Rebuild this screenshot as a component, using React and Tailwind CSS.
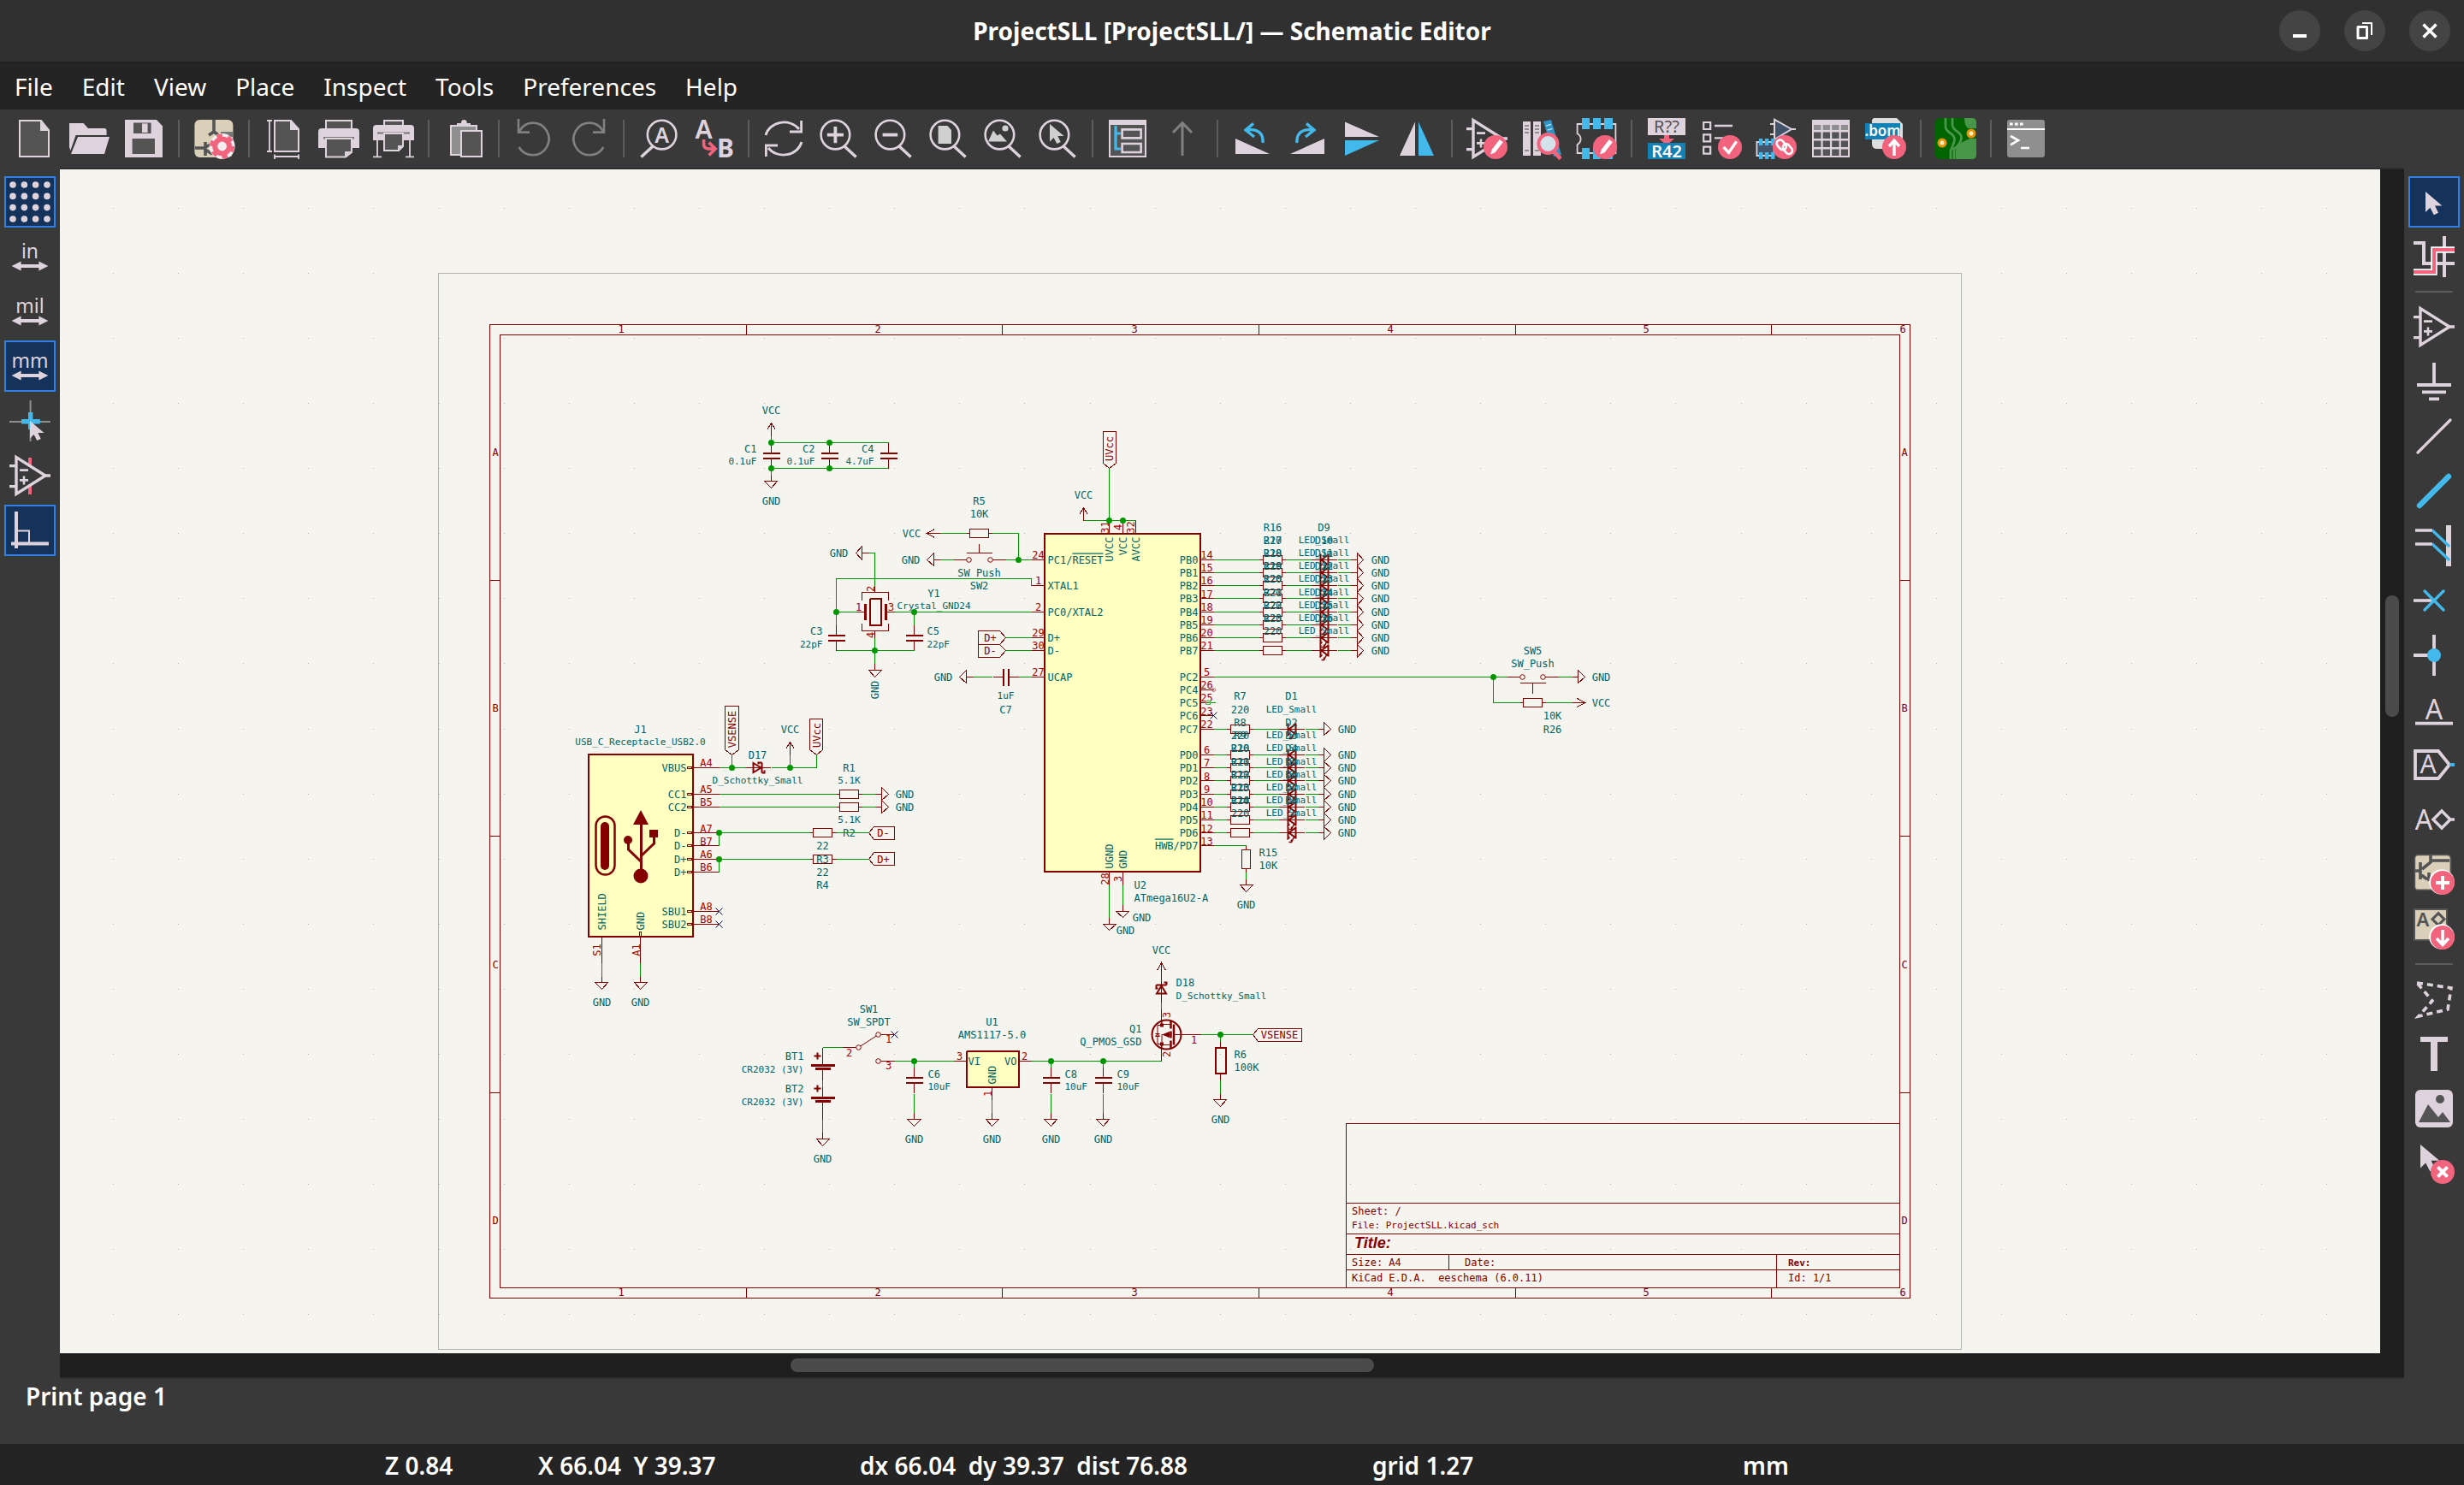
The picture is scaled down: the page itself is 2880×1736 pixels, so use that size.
import React from "react";

const LIGHT = "#ded3dd";
const BLUE = "#42b8eb";
const PINK = "#f2647e";
const DARK = "#545454";
const BEIGE = "#dacfb8";

/* ---------- icons ---------- */

const Svg = ({ children }) => (
  <svg viewBox="0 0 24 24" className="block h-12 w-12 shrink-0 overflow-visible" fill="none" aria-hidden="true">
    {children}
  </svg>
);

const Badge = ({ kind, ring }) => (
  <g transform="translate(-.5 -.5)">
    {ring && <circle cx="17" cy="17" r="7.400" fill="#fff" />}
    <circle cx="17.500" cy="17.500" r="7" fill={PINK} />
    {kind === "pencil" && <path d="M14.600 21.800l.7-2.800 4.600-6 2 1.600-4.600 6z" fill="#fff" />}
    {kind === "check" && <path d="M13.800 17.500l3 3.200 4.500-6.500" stroke="#fff" strokeWidth="1.700" />}
    {kind === "up" && <path d="M17.500 22.500v-9M14.500 17l3-3.300 3 3.300" stroke="#fff" strokeWidth="1.700" />}
    {kind === "down" && <path d="M17.500 13v9M14 18l3.500 3.700 3.500-3.700" stroke="#fff" strokeWidth="1.800" />}
    {kind === "plus" && <path d="M17.500 13.500v8M13.500 17.500h8" stroke="#fff" strokeWidth="2" />}
    {kind === "cross" && <path d="M14.700 14.700l5.600 5.600M20.300 14.700l-5.600 5.600" stroke="#fff" strokeWidth="2" />}
    {kind === "link" && (
      <g stroke="#fff" strokeWidth="1.300">
        <rect x="13.600" y="13" width="4" height="6.400" rx="2" transform="rotate(-40 15.600 16.200)" />
        <rect x="17.200" y="15.400" width="4" height="6.400" rx="2" transform="rotate(-40 19.200 18.600)" />
      </g>
    )}
  </g>
);

const Magnifier = ({ children, flip }) => (
  <Svg>
    <g transform={flip ? "matrix(-1 0 0 1 24 0)" : undefined}>
      <circle cx="10.200" cy="9.800" r="8.400" stroke={LIGHT} strokeWidth="1.300" />
      <path d="M15.500 16.500l6.800 6.300" stroke={LIGHT} strokeWidth="1.700" />
    </g>
    {children}
  </Svg>
);

const OpAmp = ({ bar }) => (
  <g>
    {bar && <path d="M12 1.500v5M12 18v5" stroke={PINK} strokeWidth="2" />}
    <path d="M4 1.300V22.700L21 12z" stroke={LIGHT} strokeWidth="1.700" />
    <path d="M0 6.300h4M0 18.300h4M20 12h4" stroke={LIGHT} strokeWidth="1.700" />
    <path d="M6 8.800h5M6 14.700h5M8.500 12.200v5" stroke={LIGHT} strokeWidth="1.300" />
  </g>
);

const Units = ({ label }) => (
  <Svg>
    <text x="12" y="13.200" textAnchor="middle" fontFamily="Noto Sans, sans-serif" fontSize="11.500" fill={LIGHT}>
      {label}
    </text>
    <path d="M4 17.500h16" stroke={LIGHT} strokeWidth="2" />
    <path d="M1.300 17.500l5.500-2.800v5.600zM22.700 17.500l-5.500-2.800v5.600z" fill={LIGHT} />
  </Svg>
);

const Cursor = ({ x = 0, y = 0, s = 1, fill = LIGHT }) => (
  <path transform={`translate(${x} ${y}) scale(${s})`} d="M0 0v12l2.700-2.600 2.200 4.200 2.600-1.200-2-4.200h4.200z" fill={fill} />
);

const icons = {
  new: (
    <Svg>
      <path d="M3.500 1.500H16l4.500 5.500V22.500h-17z" fill={DARK} stroke={LIGHT} />
      <path d="M15.500 1v6.500h5.500z" fill={LIGHT} />
    </Svg>
  ),
  open: (
    <Svg>
      <path d="M.5 3h8.300L11.500 6H21q1.300 0 1.300 1.500V10H4.300L1.200 19 .5 17z" fill={LIGHT} />
      <path d="M5.500 11H24l-3 10H1.500z" fill={LIGHT} />
    </Svg>
  ),
  save: (
    <Svg>
      <path d="M1 1h18.500L23 4.800V23H1z" fill={LIGHT} />
      <path d="M6 2.800h10.300V9H6zM5.300 12h13.200v9H5.300z" fill={DARK} />
      <path d="M11 3.200h3.300v5.300H11z" fill={LIGHT} />
    </Svg>
  ),
  setup: (
    <Svg>
      <rect x=".7" y="1" width="22.500" height="22" rx="3" fill={BEIGE} />
      <path d="M12 1v7l-3 2M12 8l4 3M7 14v8M1 17.500h6M7 17l4-2M7 18.500l4 2.500" stroke={DARK} strokeWidth="1.800" />
      <path d="M16 8h7v3h-7z" fill="#777" />
      <circle cx="16.800" cy="16.500" r="7.500" fill="#f5eef0" />
      <circle cx="16.800" cy="16.500" r="4.200" stroke={PINK} strokeWidth="3" />
      <circle cx="16.800" cy="16.500" r="6.200" stroke={PINK} strokeWidth="2.200" strokeDasharray="3.200 3.290" />
    </Svg>
  ),
  page: (
    <Svg>
      <path d="M6.500 1.500H16l4.500 5V19.500h-14z" fill={DARK} stroke={LIGHT} />
      <path d="M15.500 1v6h5.500z" fill={LIGHT} />
      <path d="M3.500 1.500v18M2 1.500h3M2 19.500h3M6.500 22.500h14M6.500 21.300v2.700M20.500 21.300v2.700" stroke={LIGHT} strokeWidth=".9" />
    </Svg>
  ),
  print: (
    <Svg>
      <path d="M4.500 1.500h15v6h-15z" fill={DARK} stroke={LIGHT} />
      <path d="M2 6h20q2 0 2 2v9.500h-4.500V12h-15v5.500H0V8q0-2 2-2z" fill={LIGHT} />
      <path d="M3 11h18v1.200H3z" fill="#777" />
      <path d="M4.500 12h15v8l-3.500 2.700H4.500z" fill={DARK} stroke={LIGHT} />
      <path d="M15.500 23v-3.500h4z" fill={LIGHT} />
    </Svg>
  ),
  plot: (
    <Svg>
      <path d="M6.500 1.500h11v4h-11z" fill={DARK} stroke={LIGHT} />
      <path d="M2 4h20q2 0 2 2v7H0V6q0-2 2-2z" fill={LIGHT} />
      <path d="M2.500 8.200h19v1h-19z" fill="#777" />
      <path d="M6.500 9h11v7.500l-2.500 2.500H6.500z" fill={DARK} stroke={LIGHT} />
      <path d="M14.500 19v-3h3z" fill={LIGHT} />
      <path d="M2.500 13v10M21.500 13v10M0 22.700h5M19 22.700h5" stroke={LIGHT} strokeWidth=".9" />
    </Svg>
  ),
  paste: (
    <Svg>
      <path d="M4.500 4.500h15v17h-15z" fill="#8f8f8f" stroke={LIGHT} />
      <path d="M8 5V3h2.500q0-2 1.700-2t1.700 2H16v2z" fill={LIGHT} />
      <path d="M10.500 7.500h12v15h-12z" fill={DARK} stroke={LIGHT} />
    </Svg>
  ),
  undo: (
    <Svg>
      <path d="M3 .5V8.300H9.500M3.300 8C5 4.800 8 2.800 11.500 2.800a9.400 9.400 0 1 1-8.200 14.200" stroke="#808080" strokeWidth="1.300" />
    </Svg>
  ),
  redo: (
    <Svg>
      <path d="M21 .5V8.300H14.500M20.700 8C19 4.800 16 2.800 12.500 2.800a9.400 9.400 0 1 0 8.200 14.200" stroke="#808080" strokeWidth="1.300" />
    </Svg>
  ),
  find: (
    <Magnifier flip>
      <text x="13.800" y="14.500" textAnchor="middle" fontFamily="Noto Sans, sans-serif" fontWeight="600" fontSize="12.500" fill={LIGHT}>A</text>
    </Magnifier>
  ),
  replace: (
    <Svg>
      <text x="6.300" y="12" textAnchor="middle" fontFamily="Noto Sans, sans-serif" fontWeight="600" fontSize="15" fill={LIGHT}>A</text>
      <text x="19" y="23" textAnchor="middle" fontFamily="Noto Sans, sans-serif" fontWeight="700" fontSize="15" fill={LIGHT}>B</text>
      <path d="M6.300 12.500v3q0 2 2.500 2.500h3M9.300 14.300l3.800 3.700-3.800 3.800" stroke={PINK} strokeWidth="1.800" />
    </Svg>
  ),
  refresh: (
    <Svg>
      <path d="M1.500 10A11 10 0 0 1 21 6.500M22.300 1.500V8H15.500" stroke={LIGHT} strokeWidth="1.400" />
      <path d="M22.500 14A11 10 0 0 1 3 17.500M1.700 22.500V16H8.500" stroke={LIGHT} strokeWidth="1.400" />
    </Svg>
  ),
  zin: <Magnifier><path d="M10.200 5v9.600M5.400 9.800h9.600" stroke={LIGHT} strokeWidth="1.900" /></Magnifier>,
  zout: <Magnifier><path d="M5.800 9.800h8.800" stroke={LIGHT} strokeWidth="1.900" /></Magnifier>,
  zfit: <Magnifier><path d="M6.300 4.500h5.400l2.300 2.500v8H6.300z" fill="#d0d0d0" /></Magnifier>,
  zobj: (
    <Magnifier>
      <path d="M3.500 13.700l3-6.500 2.300 3 1.700-1 4 4.500z" fill="#d0d0d0" />
      <circle cx="13.500" cy="6" r="1.800" fill="#d0d0d0" />
    </Magnifier>
  ),
  zsel: <Magnifier><Cursor x={7.500} y={3.500} s={0.850} fill="#d0d0d0" /></Magnifier>,
  hierarchy: (
    <Svg>
      <path d="M1.500 1.500h21v21h-21z" fill={DARK} stroke={LIGHT} />
      <path d="M1 1h22v3H1z" fill={LIGHT} />
      <path d="M5 4.500V18h3M5 9h3" stroke={BLUE} strokeWidth="1.600" />
      <path d="M8.800 6.700h11v5h-11zM8.800 15h11v5h-11z" stroke={LIGHT} strokeWidth="1.300" />
    </Svg>
  ),
  up: <Svg><path d="M12 22V3M6.500 8.500L12 2.800l5.500 5.700" stroke="#808080" strokeWidth="1.500" /></Svg>,
  ccw: (
    <Svg>
      <path d="M2 12v9h20z" fill={LIGHT} />
      <path d="M18 14.500C18.500 9 15 6 9 7M12.500 3.200L8 7l5 4" stroke={BLUE} strokeWidth="1.700" />
    </Svg>
  ),
  cw: (
    <Svg>
      <path d="M22 12v9H2z" fill={LIGHT} />
      <path d="M6 14.500C5.500 9 9 6 15 7M11.500 3.200L16 7l-5 4" stroke={BLUE} strokeWidth="1.700" />
    </Svg>
  ),
  mirv: <Svg><path d="M2 2.200v8.800h20z" fill={LIGHT} /><path d="M2 13v9L22 13z" fill={BLUE} /></Svg>,
  mirh: <Svg><path d="M11 2.200V22H2z" fill={LIGHT} /><path d="M13 2.200V22h9z" fill={BLUE} /></Svg>,
  symedit: <Svg><OpAmp /><Badge kind="pencil" /></Svg>,
  browse: (
    <Svg>
      <path d="M1 2h4.500v20H1zM7 2h4.500v20H7z" fill={LIGHT} />
      <path d="M13 2l4.500-1 6 20.500-4.500 1z" fill="#2f93c4" />
      <path d="M2 4.500h2.500M2 6.500h2.500M2 8.500h2.500M8 4.500h2.500M8 6.500h2.500M8 8.500h2.500M2 19h2.500M8 19h2.500" stroke="#8f8f8f" strokeWidth=".9" />
      <path d="M14.500 4.500l3-.8M15.300 7l3-.8" stroke="#a5d8ef" strokeWidth=".8" />
      <circle cx="15.700" cy="15" r="5.500" fill="#d3e3ec" stroke={PINK} strokeWidth="2" />
      <path d="M19 19.300l4 4.500" stroke={PINK} strokeWidth="2.300" />
    </Svg>
  ),
  fpedit: (
    <Svg>
      <path d="M.8 3.500h22.400v17H.8v-5q2-1 2-3.200t-2-3.200z" stroke={LIGHT} strokeWidth=".9" />
      <path d="M3.500 0h4.500v6.500h-4.500zM10 0h4.500v6.500h-4.500zM16.500 0h5v6.500h-5zM3.500 17.500h4.500V24h-4.500zM10 17.500h4.500V24h-4.500zM16.500 20h5v4h-5z" fill={BLUE} />
      <Badge kind="pencil" />
    </Svg>
  ),
  annotate: (
    <Svg>
      <path d="M1 0h22v10H1z" fill={LIGHT} />
      <text x="12" y="8.700" textAnchor="middle" fontFamily="Noto Sans, sans-serif" fontSize="10" fill="#545454">R??</text>
      <path d="M10.500 10h3v2h3L12 16l-4.500-4h3z" fill={PINK} />
      <path d="M1 14.500h22V24H1z" fill="#1281b5" />
      <text x="12" y="22.800" textAnchor="middle" fontFamily="Noto Sans, sans-serif" fontWeight="600" fontSize="10" fill="#fff">R42</text>
    </Svg>
  ),
  erc: (
    <Svg>
      <path d="M1.600 2.500h4v4h-4zM1.600 9.700h4v4h-4zM1.600 16.800h4v4h-4z" stroke={LIGHT} strokeWidth="1.100" />
      <path d="M8 4.500h10.500M8 11.700h7" stroke={LIGHT} strokeWidth="1.200" />
      <Badge kind="check" />
    </Svg>
  ),
  assign: (
    <Svg>
      <path d="M11 .8v11.700L21 6.500z" fill="#42546a" stroke={LIGHT} strokeWidth="1" />
      <path d="M8.500 3.500H11M8.500 9.500H11M21 6.500h2.500" stroke={LIGHT} strokeWidth="1" />
      <path d="M.7 14h10v8H.7z" fill="#42546a" stroke={LIGHT} strokeWidth=".9" />
      <path d="M2 12h2.200v4H2zM5.500 12h2.200v4H5.500zM9 12h2.200v4H9zM2 20h2.200v4H2zM5.500 20h2.200v4H5.500zM9 20h2.200v4H9z" fill={BLUE} />
      <Badge kind="link" />
    </Svg>
  ),
  table: (
    <Svg>
      <path d="M1 1h22v22H1z" fill={LIGHT} />
      <path d="M2 4h4.200v3H2zM7.300 4h4.200v3H7.300zM12.600 4h4.200v3h-4.200zM17.900 4H22v3h-4.100z" fill="#8f8f8f" />
      <path d="M2 8.200h4.200V12H2zM7.300 8.200h4.200V12H7.300zM12.600 8.200h4.200V12h-4.200zM17.900 8.200H22V12h-4.100zM2 13.200h4.200V17H2zM7.300 13.200h4.200V17H7.300zM12.600 13.200h4.200V17h-4.200zM17.900 13.200H22V17h-4.100zM2 18.200h4.200V22H2zM7.300 18.200h4.200V22H7.300zM12.600 18.200h4.200V22h-4.200zM17.900 18.200H22V22h-4.100z" fill={DARK} />
    </Svg>
  ),
  bom: (
    <Svg>
      <path d="M5 0h13.500L22 3.500V15q0 3-3 3H7q-3 0-3-3V1z" fill="#dedede" />
      <path d="M0 3h20.500v9.500H0z" fill="#1281b5" />
      <text x="10.300" y="10.300" textAnchor="middle" fontFamily="Noto Sans, sans-serif" fontWeight="600" fontSize="8.500" fill="#fff">.bom</text>
      <Badge kind="up" />
    </Svg>
  ),
  pcb: (
    <Svg>
      <rect width="24" height="24" rx="2.500" fill="#006400" />
      <path d="M17 0h4.500Q24 0 24 2.500V6h-5q-2-2-2-6zM20 12h4v9.500q0 2.500-2.500 2.500H12v-5q0-3 4-5z" fill="#489648" />
      <path d="M6 0v5q0 2 3 4t2 5-2 5v5M10 0v4q0 2 3 4t2 5-4 5v6" stroke="#489648" strokeWidth="1.400" />
      <circle cx="21" cy="9" r="2" fill="#fff3c0" stroke="#e8920c" strokeWidth="1.500" />
      <circle cx="4" cy="14.500" r="2" fill="#fff3c0" stroke="#e8920c" strokeWidth="1.500" />
    </Svg>
  ),
  console: (
    <Svg>
      <rect x="1" y="1" width="22" height="22" rx="1.500" fill="#8f8f8f" />
      <path d="M1 6.500h22" stroke="#fff" strokeWidth="1.100" />
      <path d="M2.500 3.500h1.800M5.500 3.500h1.800M8.500 3.500h1.800" stroke="#fff" strokeWidth="1.600" />
      <path d="M3 10.500l4.500 2.500L3 15.700M9 17.500h5" stroke="#fff" strokeWidth="1.300" />
    </Svg>
  ),
  grid: (
    <Svg>
      {[2, 8.700, 15.300, 22].map((y) =>
        [2, 8.700, 15.300, 22].map((x) => <circle key={`${x}-${y}`} cx={x} cy={y} r="1.900" fill={LIGHT} />)
      )}
    </Svg>
  ),
  inch: <Units label="in" />,
  mil: <Units label="mil" />,
  mm: <Units label="mm" />,
  cross: (
    <Svg>
      <path d="M12.300 0v24M0 12.500h24" stroke="#8f8f8f" />
      <path d="M11 7h2.700v4h4.200v2.800h-4.200V17H11v-3.200H7V11h4z" fill={BLUE} />
      <Cursor x={12} y={12} s={0.850} />
    </Svg>
  ),
  hidden: <Svg><OpAmp bar /></Svg>,
  ortho: (
    <Svg>
      <path d="M4 1v21.500M1 19.700h22" stroke={LIGHT} strokeWidth="2" />
      <path d="M4 12.300h7.500v7" stroke={LIGHT} strokeWidth="1" />
    </Svg>
  ),
  select: <Svg><Cursor x={7} y={6} s={1} /></Svg>,
  highlight: (
    <Svg>
      <path d="M0 4h6v12h18M18 0v24" stroke={LIGHT} strokeWidth="2" />
      <path d="M0 21h12V8h12" stroke="#fff" strokeWidth="3.800" />
      <path d="M0 21h12V8h12" stroke={PINK} strokeWidth="2" />
    </Svg>
  ),
  symbol: <Svg><OpAmp /></Svg>,
  power: <Svg><path d="M12 1v12.500M2 14h20M5 18.200h14M9 22.200h6" stroke={LIGHT} strokeWidth="1.900" /></Svg>,
  wire: <Svg><path d="M2.500 21.500l19-19" stroke={LIGHT} strokeWidth="1.600" strokeLinecap="round" /></Svg>,
  bus: <Svg><path d="M3.500 20.500l17-17" stroke={BLUE} strokeWidth="3.200" strokeLinecap="round" /></Svg>,
  entry: (
    <Svg>
      <path d="M1 3h10M1 11h10" stroke={LIGHT} strokeWidth="1.800" />
      <path d="M20.500 0v24" stroke={LIGHT} strokeWidth="3" />
      <path d="M11 3l10 9.500M11 11l10 9.500" stroke={BLUE} strokeWidth="1.700" />
    </Svg>
  ),
  noconn: (
    <Svg>
      <path d="M0 12h11" stroke={LIGHT} strokeWidth="1.800" />
      <path d="M6.500 6.500l11 11M17.500 6.500l-11 11" stroke={BLUE} strokeWidth="1.700" strokeLinecap="round" />
    </Svg>
  ),
  junction: (
    <Svg>
      <path d="M12 0v24M0 12h11" stroke={LIGHT} strokeWidth="1.900" />
      <circle cx="12" cy="12" r="4" fill={BLUE} />
    </Svg>
  ),
  label: (
    <Svg>
      <text x="12" y="17.500" textAnchor="middle" fontFamily="Noto Sans, sans-serif" fontSize="16" fill={LIGHT}>A</text>
      <path d="M1 19.800h22" stroke={LIGHT} strokeWidth="1.800" />
    </Svg>
  ),
  glabel: (
    <Svg>
      <path d="M1 4h13.500l6.500 8-6.500 8H1z" stroke={LIGHT} strokeWidth="1.900" />
      <text x="8.500" y="17.200" textAnchor="middle" fontFamily="Noto Sans, sans-serif" fontSize="15" fill={LIGHT}>A</text>
      <path d="M21 12h3" stroke={BLUE} strokeWidth="1.900" />
    </Svg>
  ),
  hlabel: (
    <Svg>
      <text x="6" y="18" textAnchor="middle" fontFamily="Noto Sans, sans-serif" fontSize="16" fill={LIGHT}>A</text>
      <path d="M16.500 7l5 5-5 5-5-5zM21 12h3" stroke={LIGHT} strokeWidth="1.700" />
    </Svg>
  ),
  sheet: (
    <Svg>
      <rect x=".7" y=".7" width="21" height="20.500" rx="2" fill={BEIGE} stroke={DARK} strokeWidth=".8" />
      <path d="M10 1v4l-5 4M10 4h11M1 10h3M4 5v10M4 12l4 3M9 11v5" stroke={DARK} strokeWidth="1.800" />
      <Badge kind="plus" ring />
    </Svg>
  ),
  import: (
    <Svg>
      <path d="M.5 .5h19v18H.5z" fill={BEIGE} stroke={DARK} />
      <text x="5.500" y="10.500" textAnchor="middle" fontFamily="Noto Sans, sans-serif" fontWeight="600" fontSize="11" fill={DARK}>A</text>
      <path d="M14.500 2.800L18 6.300l-3.500 3.500L11 6.300z" stroke={DARK} strokeWidth="1.500" />
      <Badge kind="down" ring />
    </Svg>
  ),
  poly: (
    <Svg>
      <path d="M2 2.500L22 5.500 20 18 3 22 11 13z" stroke={LIGHT} strokeWidth="1.800" strokeDasharray="3.500 2.500" />
    </Svg>
  ),
  text: <Svg><path d="M4 2h16v3h-6v17h-4V5H4z" fill={LIGHT} /></Svg>,
  image: (
    <Svg>
      <rect x="1" y="1" width="22" height="22" rx="3" fill={LIGHT} />
      <circle cx="15.500" cy="6.500" r="2.500" fill={DARK} />
      <path d="M3 20l5.500-10.500 6 7.500 2.500-3 4.500 6z" fill={DARK} />
    </Svg>
  ),
  del: <Svg><Cursor x={4} y={1} s={1.150} /><Badge kind="cross" /></Svg>,
};

/* ---------- schematic ---------- */

const SYM = "#840000";
const WIRE = "#009600";
const REF = "#006464";
const PIN = "#a90000";
const X = (n) => Math.floor(513 + n * 7.61) + 0.5;
const Y = (n) => Math.floor(319.300 + n * 7.61) + 0.5;

const Path = ({ p, c = SYM, w = 1, fill = "none" }) => (
  <polyline
    points={p.map(([a, b]) => `${X(a)},${Y(b)}`).join(" ")}
    stroke={c}
    strokeWidth={w}
    fill={fill}
    shapeRendering="crispEdges"
  />
);
const Wire = (props) => <Path {...props} c={WIRE} />;
const Dot = ({ x, y }) => <circle cx={X(x)} cy={Y(y)} r="3.500" fill={WIRE} />;
const T = ({ x, y, a = "middle", rot, c = REF, s, children, ...rest }) => {
  const size = s ?? (/[a-z]{2}/.test(String(children)) ? 11 : 12);
  return (
    <text
      transform={`translate(${X(x)} ${Y(y)})${rot ? " rotate(-90)" : ""}`}
      y={size === 11 ? 3 : 4}
      textAnchor={a}
      fill={c}
      fontSize={size}
      {...rest}
    >
      {children}
    </text>
  );
};
const Gnd = ({ x, y, d = "down", tx, ty, rot }) => {
  const k = { down: [0, 1], left: [-1, 0], right: [1, 0] }[d];
  const bx = x + k[0];
  const by = y + k[1];
  return (
    <g>
      <Path p={[[x, y], [bx, by]]} />
      <Path
        p={[[bx - k[1], by - k[0]], [bx + k[0], by + k[1]], [bx + k[1], by + k[0]], [bx - k[1], by - k[0]]]}
      />
      <T x={tx ?? bx + k[0] * 3.550} y={ty ?? by + k[1] * 3} rot={rot}>GND</T>
    </g>
  );
};
const Vcc = ({ x, y, d = "up" }) => {
  const k = { up: [0, -1], left: [-1, 0], right: [1, 0] }[d];
  const tx = x + 2 * k[0];
  const ty = y + 2 * k[1];
  const hx = tx - 1.100 * k[0];
  const hy = ty - 1.100 * k[1];
  const o = 0.650;
  return (
    <g>
      <Path p={[[x, y], [tx, ty]]} />
      <Path p={[[hx + k[1] * o, hy + k[0] * o], [tx, ty], [hx - k[1] * o, hy - k[0] * o]]} />
      <T x={tx + k[0] * 2.450} y={ty + k[1] * 2}>VCC</T>
    </g>
  );
};
const Res = ({ x, y }) => (
  <g>
    <Path p={[[x - 2, y], [x - 1.500, y]]} />
    <Path p={[[x + 1.400, y], [x + 2, y]]} />
    <rect x={X(x) - 11} y={Y(y) - 5} width="22" height="10" fill="none" stroke={SYM} shapeRendering="crispEdges" />
  </g>
);
const Cap = ({ x, y, side }) => (
  <g transform={`translate(${X(x)} ${Y(y)})${side ? " rotate(90)" : ""}`} stroke={SYM} shapeRendering="crispEdges">
    <path d="M0 -15V-3M0 3V15" />
    <path d="M-10 -3H10M-10 3H10" strokeWidth="2" />
  </g>
);
const Diode = ({ x, y, up }) => (
  <g transform={`translate(${X(x)} ${Y(y)})${up ? " rotate(-90)" : ""}`} stroke={SYM} fill="none">
    <path d="M-15 0H15" shapeRendering="crispEdges" />
    <path d="M-5 -5.500L4 0L-5 5.500z" strokeWidth="2" />
    <path d="M5 -6V6M5 6H8V3M5 -6H1V-4" strokeWidth="2" />
  </g>
);
const Led = ({ x, y }) => (
  <g transform={`translate(${X(x)} ${Y(y)})`} stroke={SYM} fill="none">
    <path d="M-15 0H15" shapeRendering="crispEdges" />
    <path d="M-4 -7V7M5 -7V7M5 -6L-3 0L5 6" strokeWidth="2" />
    <path d="M-2 5L-5 8M3 5L0 11M-3 11h3v-3" strokeWidth="1.500" />
  </g>
);
const Flag = ({ x, y, len, d, children }) => {
  const pts =
    d === "up"
      ? [[x, y], [x - 1, y - 0.800], [x - 1, y - len], [x + 1, y - len], [x + 1, y - 0.800], [x, y]]
      : d === "left"
        ? [[x, y], [x - 0.800, y - 1], [x - len, y - 1], [x - len, y + 1], [x - 0.800, y + 1], [x, y]]
        : [[x, y], [x + 0.800, y - 1], [x + len, y - 1], [x + len, y + 1], [x + 0.800, y + 1], [x, y]];
  return (
    <g>
      <Path p={pts} />
      {d === "up" ? (
        <T x={x} y={y - len / 2 - 0.200} rot c={SYM} s={12}>{children}</T>
      ) : (
        <T x={d === "left" ? x - len / 2 - 0.200 : x + len / 2 + 0.300} y={y} c={SYM} s={12}>{children}</T>
      )}
    </g>
  );
};
const Cross = ({ x, y }) => (
  <path d={`M${X(x) - 4} ${Y(y) - 4}l8 8m0 -8l-8 8`} stroke="#000084" strokeWidth="1" />
);
const Ring = ({ x, y }) => <circle cx={X(x)} cy={Y(y)} r="2.800" stroke={SYM} fill="#f5f4ef" />;

const leftPins = [
  [44, "24", null], [48, "1", "XTAL1"], [52, "2", "PC0/XTAL2"], [56, "29", "D+"], [58, "30", "D-"], [62, "27", "UCAP"],
];
const rightPins = [
  ...[14, 15, 16, 17, 18, 19, 20, 21].map((n, i) => [44 + 2 * i, n, `PB${i}`]),
  [62, 5, "PC2"], [64, 26, "PC4"], [66, 25, "PC5"], [68, 23, "PC6"], [70, 22, "PC7"],
  ...[6, 7, 8, 9, 10, 11, 12].map((n, i) => [74 + 2 * i, n, `PD${i}`]),
  [88, 13, null],
];
const usbPins = [
  [76, "A4", "VBUS"], [80, "A5", "CC1"], [82, "B5", "CC2"], [86, "A7", "D-"], [88, "B7", "D-"],
  [90, "A6", "D+"], [92, "B6", "D+"], [98, "A8", "SBU1"], [100, "B8", "SBU2"],
];
const ledRows = [
  ...[0, 1, 2, 3, 4, 5, 6, 7].map((i) => ({ y: 44 + 2 * i, r: 16 + i, d: 9 + i, x: 128, lx: 136 })),
  ...[70, 74, 76, 78, 80, 82, 84, 86].map((y, i) => ({ y, r: 7 + i, d: 1 + i, x: 123, lx: 131 })),
];

const Frame = () => (
  <g fill="none" stroke={SYM} shapeRendering="crispEdges">
    <rect x="512.500" y="319.500" width="1780" height="1258" stroke="#b4b4b0" />
    <rect x="572.500" y="379.500" width="1660" height="1138" />
    <rect x="584.500" y="391.500" width="1636" height="1114" />
    {[872.500, 1171.500, 1471.500, 1771.500, 2070.500].map((x) => (
      <path key={x} d={`M${x} 379V391M${x} 1505V1517`} />
    ))}
    {[678.500, 977.500, 1277.500].map((y) => (
      <path key={y} d={`M572 ${y}H584M2220 ${y}H2232`} />
    ))}
    <path d="M1573.500 1505V1313.500H2220M1573 1406.500H2220M1573 1442.500H2220M1573 1466.500H2220M1573 1484.500H2220M1693.500 1466V1484M2076.500 1466V1505" />
    <g fill={SYM} stroke="none" fontSize="12" textAnchor="middle">
      {[726, 1026, 1326, 1625, 1924, 2224].map((x, i) => (
        <React.Fragment key={x}>
          <text x={x} y="389">{i + 1}</text>
          <text x={x} y="1515">{i + 1}</text>
        </React.Fragment>
      ))}
      {[529, 828, 1128, 1427].map((y, i) => (
        <React.Fragment key={y}>
          <text x="579" y={y + 4}>{"ABCD"[i]}</text>
          <text x="2226" y={y + 4}>{"ABCD"[i]}</text>
        </React.Fragment>
      ))}
    </g>
    <g fill={SYM} stroke="none" fontSize="12">
      <text x="1580" y="1420">Sheet: /</text>
      <text x="1580" y="1436" fontSize="11">File: ProjectSLL.kicad_sch</text>
      <text x="1583" y="1459" fontSize="18" fontWeight="700" fontStyle="italic" fontFamily="Liberation Sans, sans-serif">Title:</text>
      <text x="1580" y="1480">Size: A4</text>
      <text x="1712" y="1480">Date:</text>
      <text x="2090" y="1480" fontWeight="700" fontSize="11">Rev:</text>
      <text x="1580" y="1498">{"KiCad E.D.A.\u00a0\u00a0eeschema (6.0.11)"}</text>
      <text x="2090" y="1498">Id: 1/1</text>
    </g>
  </g>
);

const GridDots = () => {
  const dots = [];
  for (let i = -50; i <= 290; i += 10) for (let j = -10; j <= 160; j += 10) dots.push(`M${X(i) - 0.500} ${Y(j)}h1`);
  return <path d={dots.join("")} stroke="#b0b0ac" shapeRendering="crispEdges" />;
};

const Mcu = () => (
  <g>
    <rect x={X(93) + 0.500} y={Y(40) + 0.500} width="182" height="395" fill="#ffffc2" stroke={SYM} strokeWidth="2" shapeRendering="crispEdges" />
    {leftPins.map(([y, n, name]) => (
      <g key={n}>
        <Path p={[[91, y], [93, y]]} />
        <T x={92} y={y - 0.750} c={PIN}>{n}</T>
        <T x={93.500} y={y} a="start" s={12}>
          {name ?? <>PC1/<tspan textDecoration="overline">RESET</tspan></>}
        </T>
      </g>
    ))}
    {rightPins.map(([y, n, name]) => (
      <g key={n}>
        <Path p={[[117, y], [119, y]]} />
        <T x={118} y={y - 0.750} c={PIN}>{n}</T>
        <T x={116.600} y={y} a="end" s={12}>
          {name ?? <><tspan textDecoration="overline">HWB</tspan>/PD7</>}
        </T>
      </g>
    ))}
    {[[103, 31, "UVCC"], [105, 4, "VCC"], [107, 32, "AVCC"]].map(([x, n, name]) => (
      <g key={n}>
        <Path p={[[x, 38], [x, 40]]} />
        <T x={x - 0.750} y={39} rot c={PIN}>{n}</T>
        <T x={x} y={40.500} rot a="end">{name}</T>
      </g>
    ))}
    {[[103, 28, "UGND"], [105, 3, "GND"]].map(([x, n, name]) => (
      <g key={n}>
        <Path p={[[x, 92], [x, 94]]} />
        <T x={x - 0.750} y={93} rot c={PIN}>{n}</T>
        <T x={x} y={91.500} rot a="start">{name}</T>
      </g>
    ))}
    <T x={106.800} y={94} a="start">U2</T>
    <T x={106.800} y={96} a="start" s={12}>ATmega16U2-A</T>
    <Wire p={[[103, 94], [103, 99]]} />
    <Gnd x={103} y={99} tx={105.500} ty={101} />
    <Wire p={[[105, 94], [105, 97]]} />
    <Gnd x={105} y={97} tx={108} ty={99} />
    <Flag x={103} y={30} len={5.600} d="up">UVcc</Flag>
    <Wire p={[[103, 30], [103, 38]]} />
    <Vcc x={99} y={38} />
    <Wire p={[[99, 38], [107, 38]]} />
    <Dot x={103} y={38} />
    <Dot x={105} y={38} />
    <circle cx={X(119)} cy={Y(64)} r="2" stroke="#c86464" fill="none" />
    <Wire p={[[118, 66], [119.200, 66]]} />
    <rect x={X(118.100) - 2} y={Y(66) - 2} width="5" height="4" fill="none" stroke="#50b450" />
    <Cross x={119} y={68} />
  </g>
);

const Usb = () => (
  <g>
    <rect x={X(23) - 0.500} y={Y(74) - 0.500} width="122" height="213" fill="#ffffc2" stroke={SYM} strokeWidth="2" shapeRendering="crispEdges" />
    <T x={31} y={70}>J1</T>
    <T x={31} y={72}>USB_C_Receptacle_USB2.0</T>
    {usbPins.map(([y, n, name]) => (
      <g key={n}>
        <Path p={[[39, y], [43, y]]} />
        <T x={41} y={y - 0.750} c={PIN}>{n}</T>
        <T x={38} y={y} a="end">{name}</T>
        <rect x={X(38.150)} y={Y(y) - 1} width="5" height="2" fill="none" stroke={SYM} shapeRendering="crispEdges" />
      </g>
    ))}
    <T x={25} y={101} rot a="start">SHIELD</T>
    <T x={31} y={101} rot a="start">GND</T>
    <rect x={X(31) - 1} y={Y(101.200)} width="2" height="5" fill="none" stroke={SYM} shapeRendering="crispEdges" />
    {[[25, "S1"], [31, "A1"]].map(([x, n]) => (
      <g key={n}>
        <Path p={[[x, 102], [x, 106]]} />
        <T x={x - 0.750} y={104} rot c={PIN}>{n}</T>
        <Wire p={[[x, 106], [x, 108]]} />
        <Gnd x={x} y={108} />
      </g>
    ))}
    <rect x="696.500" y="954.500" width="22" height="68" rx="11" fill="none" stroke={SYM} strokeWidth="2.500" />
    <rect x="702" y="961" width="10" height="56" rx="5" fill={SYM} />
    <g fill={SYM}>
      <path d="M749 947l9 17h-18z" />
      <circle cx="749" cy="1024" r="8.500" />
      <circle cx="734" cy="982" r="5" />
      <path d="M759 970h10v9h-10z" />
    </g>
    <path d="M749.500 963V1018M734.500 984V993L749 1007M764.500 978V986L750 1000" fill="none" stroke={SYM} strokeWidth="3" />
    <Cross x={43} y={98} />
    <Cross x={43} y={100} />

    <Wire p={[[43, 76], [47, 76]]} />
    <Diode x={49} y={76} />
    <Wire p={[[51, 76], [58, 76], [58, 74]]} />
    <Wire p={[[45, 74], [45, 76]]} />
    <Wire p={[[54, 74], [54, 76]]} />
    <Flag x={45} y={74} len={7.500} d="up">VSENSE</Flag>
    <Flag x={58} y={74} len={5.500} d="up">UVcc</Flag>
    <Vcc x={54} y={74} />
    <Dot x={45} y={76} />
    <Dot x={54} y={76} />
    <T x={49} y={74}>D17</T>
    <T x={49} y={78}>D_Schottky_Small</T>

    {[80, 82].map((y) => (
      <g key={y}>
        <Wire p={[[43, y], [61, y]]} />
        <Res x={63} y={y} />
        <Wire p={[[65, y], [67, y]]} />
        <Gnd x={67} y={y} d="right" />
      </g>
    ))}
    <T x={63} y={76}>R1</T>
    <T x={63} y={78} s={11}>5.1K</T>
    <T x={63} y={84} s={11}>5.1K</T>
    <T x={63} y={86}>R2</T>
    {[[86, "D-"], [90, "D+"]].map(([y, n]) => (
      <g key={n}>
        <Wire p={[[43, y + 2], [43, y], [57, y]]} />
        <Res x={59} y={y} />
        <Wire p={[[61, y], [66, y]]} />
        <Flag x={66} y={y} len={4} d="right">{n}</Flag>
        <Dot x={43} y={y} />
      </g>
    ))}
    <T x={59} y={88}>22</T>
    <T x={59} y={90}>R3</T>
    <T x={59} y={92}>22</T>
    <T x={59} y={94}>R4</T>
  </g>
);

const Oscillator = () => (
  <g>
    <Vcc x={51} y={25} />
    <Wire p={[[51, 25], [51, 26], [69, 26]]} />
    <Wire p={[[69, 30], [51, 30], [51, 31]]} />
    {[[51, "C1", "0.1uF"], [60, "C2", "0.1uF"], [69, "C4", "4.7uF"]].map(([x, r, v]) => (
      <g key={r}>
        <Cap x={x} y={28} />
        <T x={x - 2.200} y={27} a="end">{r}</T>
        <T x={x - 2.200} y={29} a="end" s={11}>{v}</T>
      </g>
    ))}
    <Dot x={51} y={26} />
    <Dot x={60} y={26} />
    <Dot x={51} y={30} />
    <Dot x={60} y={30} />
    <Gnd x={51} y={31} />

    <T x={83} y={35}>R5</T>
    <T x={83} y={37}>10K</T>
    <Vcc x={77} y={40} d="left" />
    <Wire p={[[77, 40], [81, 40]]} />
    <Res x={83} y={40} />
    <Wire p={[[85, 40], [89, 40], [89, 44]]} />
    <Gnd x={77} y={44} d="left" />
    <Wire p={[[77, 44], [79, 44]]} />
    <Path p={[[79, 44], [81.300, 44]]} />
    <Path p={[[84.700, 44], [87, 44]]} />
    <Ring x={81.350} y={44} />
    <Ring x={84.650} y={44} />
    <Path p={[[81, 43], [85, 43]]} />
    <Path p={[[83, 41.500], [83, 43]]} />
    <Wire p={[[87, 44], [91, 44]]} />
    <Dot x={89} y={44} />
    <T x={83} y={46} s={12}>SW_Push</T>
    <T x={83} y={48}>SW2</T>

    <Gnd x={66} y={43} d="left" />
    <Wire p={[[66, 43], [67, 43], [67, 48]]} />
    <Path p={[[67, 48], [67, 49.100]]} />
    <Path p={[[65, 50.250], [65, 49.100], [69, 49.100], [69, 50.250]]} />
    <Path p={[[65, 53.800], [65, 54.900], [69, 54.900], [69, 53.800]]} />
    <Path p={[[66.100, 50], [67.900, 50], [67.900, 54], [66.100, 54], [66.100, 50]]} w={2} />
    <Path p={[[65.500, 50.750], [65.500, 53.250]]} w={3} />
    <Path p={[[68.700, 50.750], [68.700, 53.250]]} w={3} />
    <Path p={[[64, 52], [65.500, 52]]} />
    <Path p={[[68.700, 52], [70, 52]]} />
    <Path p={[[67, 54.900], [67, 56]]} />
    <T x={64.500} y={51.250} c={PIN}>1</T>
    <T x={69.500} y={51.250} c={PIN}>3</T>
    <T x={66.250} y={48.500} rot c={PIN}>2</T>
    <T x={66.250} y={55.600} rot c={PIN}>4</T>
    <T x={76} y={49.200}>Y1</T>
    <T x={76} y={51.200} s={11}>Crystal_GND24</T>
    <Wire p={[[64, 52], [61, 52], [61, 47], [91, 47], [91, 48]]} />
    <Wire p={[[61, 52], [61, 54]]} />
    <Wire p={[[73, 52], [73, 54]]} />
    <Wire p={[[70, 52], [91, 52]]} />
    <Cap x={61} y={56} />
    <Cap x={73} y={56} />
    <Wire p={[[61, 58], [73, 58]]} />
    <Wire p={[[67, 56], [67, 60]]} />
    <Dot x={61} y={52} />
    <Dot x={73} y={52} />
    <Dot x={67} y={58} />
    <Gnd x={67} y={60} rot />
    <T x={59} y={55} a="end">C3</T>
    <T x={59} y={57} a="end" s={11}>22pF</T>
    <T x={75} y={55} a="start">C5</T>
    <T x={75} y={57} a="start" s={11}>22pF</T>

    <Flag x={87} y={56} len={4.100} d="left">D+</Flag>
    <Flag x={87} y={58} len={4.100} d="left">D-</Flag>
    <Wire p={[[87, 56], [91, 56]]} />
    <Wire p={[[87, 58], [91, 58]]} />
    <Gnd x={82} y={62} d="left" />
    <Wire p={[[82, 62], [85, 62]]} />
    <Cap x={87} y={62} side />
    <Wire p={[[89, 62], [91, 62]]} />
    <T x={87} y={65} s={11}>1uF</T>
    <T x={87} y={67}>C7</T>
  </g>
);

const Outputs = () => (
  <g>
    {ledRows.map(({ y, r, d, x, lx }) => (
      <g key={r}>
        <Wire p={[[119, y], [x - 2, y]]} />
        <Res x={x} y={y} />
        <Wire p={[[x + 2, y], [lx - 2, y]]} />
        <Led x={lx} y={y} />
        <Wire p={[[lx + 2, y], [lx + 4, y]]} />
        <Gnd x={lx + 4} y={y} d="right" />
        <T x={x} y={y - 5}>{`R${r}`}</T>
        <T x={x} y={y - 3}>220</T>
        <T x={lx} y={y - 5}>{`D${d}`}</T>
        <T x={lx} y={y - 3}>LED_Small</T>
      </g>
    ))}
    <Wire p={[[119, 88], [124, 88]]} />
    <Path p={[[124, 88], [124, 88.600]]} />
    <rect x={X(124) - 5} y={Y(90) - 11} width="10" height="22" fill="none" stroke={SYM} shapeRendering="crispEdges" />
    <Path p={[[124, 91.400], [124, 92]]} />
    <Wire p={[[124, 92], [124, 93]]} />
    <Gnd x={124} y={93} />
    <T x={126} y={89} a="start">R15</T>
    <T x={126} y={91} a="start">10K</T>

    <Wire p={[[119, 62], [164, 62]]} />
    <Wire p={[[162, 62], [162, 66], [166, 66]]} />
    <Dot x={162} y={62} />
    <Path p={[[164, 62], [166.300, 62]]} />
    <Path p={[[169.700, 62], [172, 62]]} />
    <Ring x={166.400} y={62} />
    <Ring x={169.600} y={62} />
    <Path p={[[166, 63], [170, 63]]} />
    <Path p={[[168, 63], [168, 64.500]]} />
    <Wire p={[[172, 62], [174, 62]]} />
    <Gnd x={174} y={62} d="right" />
    <Res x={168} y={66} />
    <Wire p={[[170, 66], [174, 66]]} />
    <Vcc x={174} y={66} d="right" />
    <T x={168} y={58}>SW5</T>
    <T x={168} y={60} s={12}>SW_Push</T>
    <T x={171} y={68}>10K</T>
    <T x={171} y={70}>R26</T>
  </g>
);

const Battery = ({ y, name }) => (
  <g>
    <path
      d={`M${X(59) - 14} ${Y(y) - 2}h28M${X(59) - 9} ${Y(y) + 2}h18`}
      stroke={SYM}
      strokeWidth="3"
      shapeRendering="crispEdges"
    />
    <path d={`M${X(58.200) - 4} ${Y(y - 1.700)}h8m-4 -4v8`} stroke={SYM} strokeWidth="2" />
    <T x={56} y={y - 1.700} a="end">{name}</T>
    <T x={56} y={y + 0.400} a="end" s={11}>CR2032 (3V)</T>
  </g>
);

const PowerSupply = () => (
  <g>
    <Wire p={[[59, 119], [62, 119]]} />
    <Path p={[[59, 119], [59, 121.700]]} />
    <Path p={[[59, 122.300], [59, 124]]} />
    <Wire p={[[59, 124], [59, 125]]} />
    <Path p={[[59, 125], [59, 126.700]]} />
    <Path p={[[59, 127.300], [59, 130]]} />
    <Wire p={[[59, 130], [59, 132]]} />
    <Gnd x={59} y={132} />
    <Battery y={122} name="BT1" />
    <Battery y={127} name="BT2" />
    <Path p={[[62, 119], [64.400, 119]]} />
    <Path p={[[67.500, 117], [70, 117]]} />
    <Path p={[[67.500, 121], [70, 121]]} />
    <path d={`M${X(64.400)} ${Y(119)}L${X(67.500)} ${Y(117)}`} stroke={SYM} />
    <Ring x={64.400} y={119} />
    <Ring x={67.500} y={117} />
    <Ring x={67.500} y={121} />
    <Cross x={70} y={117} />
    <T x={66} y={113}>SW1</T>
    <T x={66} y={115}>SW_SPDT</T>
    <T x={63} y={119.700} c={PIN}>2</T>
    <T x={69} y={117.700} c={PIN}>1</T>
    <T x={69} y={121.700} c={PIN}>3</T>

    <Wire p={[[70, 121], [79, 121]]} />
    <Path p={[[79, 121], [81, 121]]} />
    <Path p={[[89, 121], [91, 121]]} />
    <Path p={[[85, 125], [85, 127]]} />
    <Path p={[[81, 119.500], [89, 119.500], [89, 125], [81, 125], [81, 119.500]]} w={2} fill="#ffffc2" />
    <T x={81.300} y={121} a="start">VI</T>
    <T x={88.800} y={121} a="end">VO</T>
    <T x={85} y={124.600} a="start" rot>GND</T>
    <T x={80} y={120.250} c={PIN}>3</T>
    <T x={90} y={120.250} c={PIN}>2</T>
    <T x={84.250} y={126} rot c={PIN}>1</T>
    <T x={85} y={115}>U1</T>
    <T x={85} y={117}>AMS1117-5.0</T>
    <Wire p={[[85, 127], [85, 129]]} />
    <Gnd x={85} y={129} />
    {[[73, "C6"], [94, "C8"], [102, "C9"]].map(([x, n]) => (
      <g key={n}>
        <Wire p={[[x, 121], [x, 122]]} />
        <Cap x={x} y={124} />
        <Wire p={[[x, 126], [x, 129]]} />
        <Gnd x={x} y={129} />
        <Dot x={x} y={121} />
        <T x={x + 2.100} y={123} a="start">{n}</T>
        <T x={x + 2.100} y={125} a="start" s={11}>10uF</T>
      </g>
    ))}
    <Wire p={[[91, 121], [111, 121]]} />
    <Path p={[[111, 118.500], [111, 121]]} />
    <Path p={[[111, 113], [111, 115.700]]} />
    <Wire p={[[111, 112], [111, 113]]} />
    <Diode x={111} y={110} up />
    <Vcc x={111} y={108} />
    <T x={113.200} y={109} a="start">D18</T>
    <T x={113.200} y={111} a="start">D_Schottky_Small</T>
    <g transform={`translate(${X(111.700)} ${Y(117)})`} stroke={SYM} fill="none">
      <circle r="17" strokeWidth="2" />
      <path d="M-5.500 -12H5M-5.500 12H5M-10.500 -11V11H-5.500M-10.500 -11H-5.500M-5.500 -12V-17M-5.500 0V17M-5.500 0H5M8 0H16" />
      <path d="M5 -16V-7M5 -4V4M5 7V16M8.500 -12V12" strokeWidth="2.500" />
      <path d="M-13 -1L-8 -1M-13 2L-10.500 -1L-8 2z" />
      <path d="M-4 0L3 -3V3z" fill={SYM} />
      <path d="M-7.500 -13h4v4h-4zM-7.500 9h4v4h-4z" fill={SYM} stroke="none" />
    </g>
    <Path p={[[113.500, 117], [117, 117]]} />
    <T x={116} y={117.800} c={PIN}>1</T>
    <T x={111.750} y={114} rot c={PIN}>3</T>
    <T x={111.750} y={120} rot c={PIN}>2</T>
    <T x={108} y={116} a="end">Q1</T>
    <T x={108} y={118} a="end">Q_PMOS_GSD</T>
    <Wire p={[[117, 117], [125, 117]]} />
    <Wire p={[[120, 117], [120, 118]]} />
    <Dot x={120} y={117} />
    <Flag x={125} y={117} len={7.500} d="right">VSENSE</Flag>
    <Path p={[[120, 118], [120, 119]]} />
    <rect x={X(120) - 6} y={Y(119)} width="12" height="30" fill="none" stroke={SYM} strokeWidth="2" shapeRendering="crispEdges" />
    <Path p={[[120, 123], [120, 124]]} />
    <Wire p={[[120, 124], [120, 126]]} />
    <Gnd x={120} y={126} />
    <T x={122.200} y={120} a="start">R6</T>
    <T x={122.200} y={122} a="start">100K</T>
  </g>
);

const Schematic = () => (
  <svg
    viewBox="70 198 2712 1384"
    className="block h-full w-full"
    preserveAspectRatio="xMidYMid meet"
    fontFamily="DejaVu Sans Mono, monospace"
    role="img"
    aria-label="ProjectSLL schematic"
  >
    <GridDots />
    <Frame />
    <Oscillator />
    <Usb />
    <Mcu />
    <Outputs />
    <PowerSupply />
  </svg>
);

/* ---------- window ---------- */

const topTools = [
  ["new", "open", "save"], ["setup"], ["page", "print", "plot"], ["paste"], ["undo", "redo"], ["find", "replace"],
  ["refresh", "zin", "zout", "zfit", "zobj", "zsel"], ["hierarchy", "up"], ["ccw", "cw", "mirv", "mirh"],
  ["symedit", "browse", "fpedit"], ["annotate", "erc", "assign", "table", "bom"], ["pcb"], ["console"],
];
const leftTools = [["grid", "inch", "mil", "mm", "cross", "hidden", "ortho"]];
const rightTools = [
  ["select", "highlight"],
  ["symbol", "power", "wire", "bus", "entry", "noconn", "junction", "label", "glabel", "hlabel", "sheet", "import"],
  ["poly", "text", "image", "del"],
];

const Tool = ({ name, active }) => (
  <button type="button" aria-label={name} aria-pressed={active} className="flex h-16 w-16 shrink-0 items-center justify-center">
    <span
      className={
        active
          ? "flex h-[60px] w-[60px] items-center justify-center border-2 border-[#3181e3] bg-[#15325a]"
          : "flex items-center justify-center"
      }
    >
      {icons[name]}
    </span>
  </button>
);

const SideBar = ({ groups, active }) => (
  <aside className="flex w-[70px] shrink-0 flex-col items-center bg-[#393939] pt-2">
    {groups.map((group, i) => (
      <React.Fragment key={i}>
        {i > 0 && <div className="my-2 h-0.5 w-11 bg-[#5b5b5b]" />}
        {group.map((name) => (
          <Tool key={name} name={name} active={active.includes(name)} />
        ))}
      </React.Fragment>
    ))}
  </aside>
);

const WinButton = ({ label, children }) => (
  <button type="button" aria-label={label} className="flex h-12 w-12 items-center justify-center rounded-full bg-[#444444] text-white">
    <svg viewBox="0 0 24 24" className="h-6 w-6" fill="none" stroke="currentColor" aria-hidden="true">
      {children}
    </svg>
  </button>
);

export default function App() {
  return (
    <div className="flex h-screen min-w-0 flex-col overflow-hidden bg-[#393939] font-['Noto_Sans',sans-serif] text-white">
      <header className="grid h-[74px] shrink-0 grid-cols-[1fr_auto_1fr] items-center border-b-2 border-[#202020] bg-[#303030] px-4">
        <span />
        <h1 className="text-[28px] leading-9 font-bold">ProjectSLL [ProjectSLL/] — Schematic Editor</h1>
        <div className="flex justify-end gap-7">
          <WinButton label="Minimize"><path d="M4 18h16" strokeWidth="4" /></WinButton>
          <WinButton label="Restore">
            <path d="M4 7.500h10.500v13H4z" strokeWidth="3" strokeLinejoin="round" />
            <path d="M9 3h11v14" strokeWidth="2" strokeLinejoin="round" />
          </WinButton>
          <WinButton label="Close"><path d="M4.500 4.500l15 15M19.500 4.500l-15 15" strokeWidth="3.500" /></WinButton>
        </div>
      </header>

      <nav className="flex h-[54px] shrink-0 items-center bg-[#242424] text-[28px] leading-9">
        {["File", "Edit", "View", "Place", "Inspect", "Tools", "Preferences", "Help"].map((m) => (
          <button key={m} type="button" className="px-[17px]">{m}</button>
        ))}
      </nav>

      <div className="flex h-[68px] shrink-0 items-center overflow-hidden bg-[#393939] pl-2" role="toolbar">
        {topTools.map((group, i) => (
          <React.Fragment key={i}>
            {i > 0 && <div className="mx-2 h-11 w-0.5 shrink-0 bg-[#5b5b5b]" />}
            {group.map((name) => (
              <Tool key={name} name={name} />
            ))}
          </React.Fragment>
        ))}
      </div>

      <div className="flex min-h-0 flex-1">
        <SideBar groups={leftTools} active={["grid", "mm", "ortho"]} />
        <main className="flex min-w-0 flex-1 flex-col border-y-2 border-[#2d2d2d]">
          <div className="flex min-h-0 flex-1">
            <div className="min-w-0 flex-1 bg-[#f5f4ef]">
              <Schematic />
            </div>
            <div className="flex w-7 shrink-0 flex-col items-center bg-[#1e1e1e]">
              <div className="flex-[498]" />
              <div className="w-4 flex-[142] rounded-full bg-[#4b4b4b]" />
              <div className="flex-[744]" />
            </div>
          </div>
          <div className="flex h-7 shrink-0 items-center bg-[#1e1e1e]">
            <div className="flex-[854]" />
            <div className="h-4 flex-[682] rounded-full bg-[#4b4b4b]" />
            <div className="flex-[1204]" />
          </div>
        </main>
        <SideBar groups={rightTools} active={["select"]} />
      </div>

      <div className="h-[76px] shrink-0 bg-[#393939] px-[30px] text-[28px] leading-10 font-semibold">Print page 1</div>
      <footer className="grid h-12 shrink-0 grid-cols-[450fr_179fr_376fr_599fr_433fr_843fr] items-center bg-[#242424] pt-0.5 text-[28px] leading-9 font-semibold whitespace-nowrap">
        <span />
        <span>Z 0.84</span>
        <span className="whitespace-pre">{"X 66.04  Y 39.37"}</span>
        <span className="whitespace-pre">{"dx 66.04  dy 39.37  dist 76.88"}</span>
        <span>grid 1.27</span>
        <span>mm</span>
      </footer>
    </div>
  );
}
